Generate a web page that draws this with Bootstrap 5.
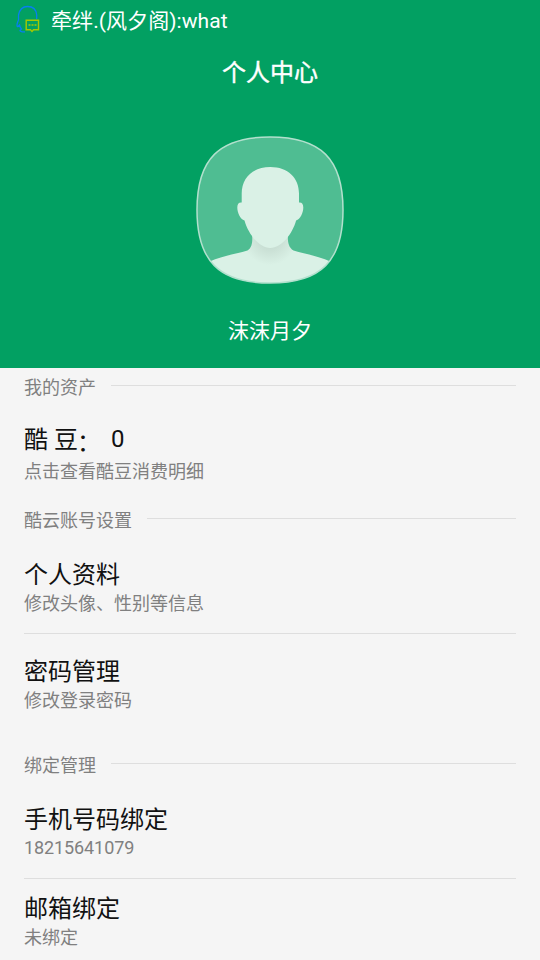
<!DOCTYPE html>
<html lang="zh-CN">
<head>
<meta charset="utf-8">
<meta name="viewport" content="width=device-width, initial-scale=1">
<title>个人中心</title>
<link href="https://cdn.jsdelivr.net/npm/bootstrap@5.3.0/dist/css/bootstrap.min.css" rel="stylesheet">
<style>
body{background:#f5f5f5;font-family:Roboto,"Noto Sans CJK SC",sans-serif;color:#111;width:540px;height:960px;overflow:hidden}
.hero{background:#02a062;height:368px}
.status{height:40px;padding-left:16px;font-size:21px;line-height:40px}
.status svg{margin-right:9px}
.status span{padding-top:2px;letter-spacing:.07px}
.page-title{font-size:24px;line-height:30px;margin:18px 0 0;font-weight:400;-webkit-text-stroke:.4px #fff}
.avatar{margin-top:47px}
.user-name{font-size:21px;line-height:30px;margin-top:31px}
.section-head{font-size:18px;line-height:24px;height:24px;color:#808080}
.section-head hr,.divider{border:0;height:1px;background:#dedede;opacity:1}
.section-head hr{margin:9px 0 0 15px}
.divider{margin:17px 0 0}
.item-title{font-size:24px;line-height:30px;height:30px;margin:0;font-weight:400;white-space:pre}
.item-sub{font-size:18px;line-height:24px;height:24px;margin:2px 0 0;color:#808080}
.phone{line-height:22px;letter-spacing:-.1px}
.colon{position:relative;top:3px;left:-1px}
.amount{display:inline-block;margin-left:3px;line-height:28px;vertical-align:top}
.gap-a{margin-top:25px}.gap-b{margin-top:27px}.gap-c{margin-top:23px}.gap-d{margin-top:41px}.gap-e{margin-top:15px}
.first-head{margin-top:8px}
.wide{margin-top:5px}
</style>
<script src="https://cdn.jsdelivr.net/npm/bootstrap@5.3.0/dist/js/bootstrap.bundle.min.js"></script>
</head>
<body>
<header class="hero text-white d-flex flex-column align-items-center">
  <div class="status d-flex align-items-center w-100">
    <svg width="26" height="32" viewBox="0 0 26 32" fill="none">
      <path d="M20.700 15V11C20.200 5 16.500 2.500 11.500 2.500S3.500 6 2.500 11v4.500c0 1.500-1.500 3-1.500 5.500 0 1.500.5 2 1 1.500l1.500-1.500c.5 2 1 3 2 4l-1.500 1.500c0 1 2 1.500 5 1.300" stroke="#087ff0" stroke-width="1.300"/>
      <path d="M10.200 16.200h12.300v9.600h-5l-1.500 1.700-1.500-1.700h-4.300z" stroke="#a5c800" stroke-width="1.400"/>
      <path d="M12.500 21h2m1 0h2m1 0h2" stroke="#a5c800" stroke-width="1.500"/>
    </svg>
    <span>牵绊.(风夕阁):what</span>
  </div>
  <h1 class="page-title">个人中心</h1>
  <svg class="avatar flex-shrink-0" width="150" height="150" viewBox="0 0 150 150">
    <defs>
      <clipPath id="shape"><path d="M75 2C126 2 148 24 148 75S126 148 75 148 2 126 2 75 24 2 75 2Z"/></clipPath>
      <radialGradient id="shade" gradientUnits="userSpaceOnUse" cx="75" cy="103" r="27"><stop offset="0" stop-color="#c3dacf"/><stop offset=".4" stop-color="#c9dfd4"/><stop offset="1" stop-color="#daf1e6"/></radialGradient>
    </defs>
    <g clip-path="url(#shape)">
      <path fill="#4fbd92" d="M0 0h150v150H0z"/>
      <path fill="url(#shade)" d="M57 98c.7 8 .5 14-4.500 17.500C41 119 28 120.500 13.500 127v23h123v-23c-14.500-6.500-26.500-8-38-11.500-5.500-3.500-6-9.500-5.500-17.500z"/>
      <path fill="#daf1e6" d="M75.300 32C57.500 32 46.700 43 46.700 58.500v9c-3-.3-4.400 1.500-4.400 5 0 5 3 12 7.200 13 3.500 13 14.500 27.500 25.800 27.500s22.300-14.500 25.800-27.500c4.200-1 7.200-8 7.200-13 0-3.500-1.400-5.300-4.300-5v-9C104 43 93 32 75.300 32z"/>
    </g>
    <path d="M75 2C126 2 148 24 148 75S126 148 75 148 2 126 2 75 24 2 75 2Z" fill="none" stroke="#b2e0cd" stroke-width="1.500"/>
  </svg>
  <div class="user-name">沫沫月夕</div>
</header>
<main class="px-4 d-flex flex-column">
  <div class="section-head first-head d-flex align-items-start"><span>我的资产</span><hr class="flex-grow-1"></div>
  <h2 class="item-title gap-a">酷 豆<span class="colon">：</span> <span class="amount">0</span></h2>
  <p class="item-sub wide">点击查看酷豆消费明细</p>
  <div class="section-head gap-a d-flex align-items-start"><span>酷云账号设置</span><hr class="flex-grow-1"></div>
  <h2 class="item-title gap-b">个人资料</h2>
  <p class="item-sub">修改头像、性别等信息</p>
  <hr class="divider">
  <h2 class="item-title gap-c">密码管理</h2>
  <p class="item-sub">修改登录密码</p>
  <div class="section-head gap-d d-flex align-items-start"><span>绑定管理</span><hr class="flex-grow-1"></div>
  <h2 class="item-title gap-b">手机号码绑定</h2>
  <p class="item-sub phone">18215641079</p>
  <hr class="divider">
  <h2 class="item-title gap-e">邮箱绑定</h2>
  <p class="item-sub">未绑定</p>
</main>
</body>
</html>
